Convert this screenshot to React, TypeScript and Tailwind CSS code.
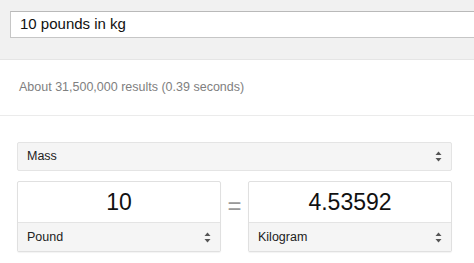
import React from 'react';

const Arrows = () => (
  <svg width="7" height="11" viewBox="0 0 7 11" className="shrink-0">
    <path d="M3.5 0.5 L6.5 4 H0.5 Z" fill="#555" />
    <path d="M3.5 10.5 L6.5 7 H0.5 Z" fill="#555" />
  </svg>
);

const UnitSelect = ({ label }: { label: string }) => (
  <div className="flex h-[29px] items-center justify-between border-t border-[#e4e4e4] bg-[#f5f5f5] pl-[9px] pr-[9px] text-[12.5px] text-[#222]">
    <span>{label}</span>
    <Arrows />
  </div>
);

const UnitBox = ({ value, unit }: { value: string; unit: string }) => (
  <div className="flex w-[204px] flex-col rounded-[2px] border border-[#e0e0e0] bg-white shadow-[0_1px_1px_rgba(0,0,0,0.05)]">
    <div className="flex h-[40px] items-center justify-center text-[23px] text-[#111]">{value}</div>
    <UnitSelect label={unit} />
  </div>
);

export default function App() {
  return (
    <div className="h-[263px] w-[474px] overflow-hidden bg-white font-['Liberation_Sans',Arial,sans-serif]">
      <div className="h-[60px] border-b border-[#e5e5e5] bg-[#f1f1f1] pl-[10px] pt-[11px]">
        <div className="flex h-[27px] w-[480px] items-center border border-[#c6c6c6] border-t-[#b9b9b9] bg-white pl-[9px] text-[15px] text-[#111]">
          10 pounds in kg
        </div>
      </div>
      <div className="flex h-[56px] items-center border-b border-[#ebebeb] pl-[19px] text-[12.5px] text-[#808080]">
        About 31,500,000 results (0.39 seconds)
      </div>
      <div className="flex w-[452px] flex-col gap-[10px] pl-[17px] pt-[26px]">
        <div className="flex h-[29px] items-center justify-between rounded-[2px] border border-[#e4e4e4] bg-[#f5f5f5] px-[9px] text-[12.5px] text-[#222]">
          <span>Mass</span>
          <Arrows />
        </div>
        <div className="flex items-center">
          <UnitBox value="10" unit="Pound" />
          <div className="flex flex-1 justify-center pb-[22px] text-[24px] text-[#999]">=</div>
          <UnitBox value="4.53592" unit="Kilogram" />
        </div>
      </div>
    </div>
  );
}
